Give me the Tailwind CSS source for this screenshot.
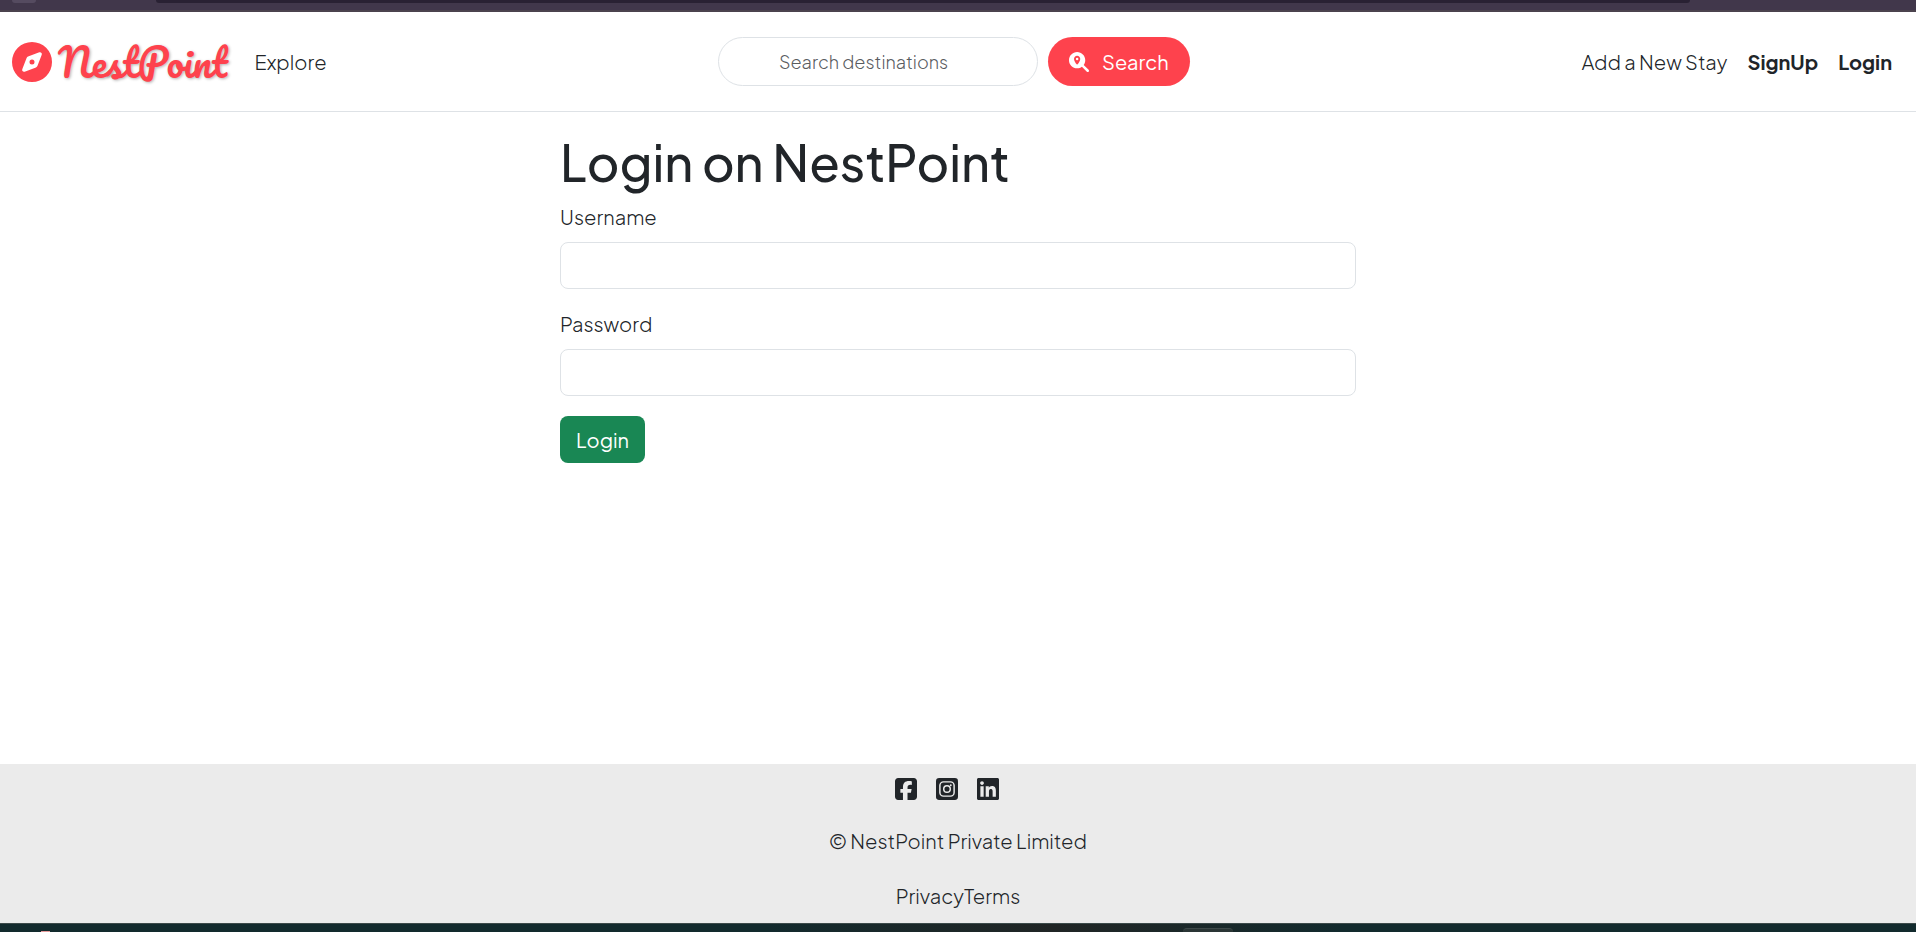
<!DOCTYPE html>
<html lang="en">
<head>
<meta charset="utf-8">
<meta name="viewport" content="width=device-width, initial-scale=1">
<title>NestPoint</title>
<script src="https://cdn.jsdelivr.net/npm/@tailwindcss/browser@4"></script>
</head>
<body class="flex min-h-screen flex-col bg-white font-['Plus_Jakarta_Sans','Inter',sans-serif] text-xl font-light text-[#212529]">
  <!-- browser frame edge -->
  <div class="flex h-3 items-start border-b-2 border-[#4b434e] bg-[#41374b]">
    <div class="ml-3 h-[3px] w-6 rounded-b-full bg-[#554b60]"></div>
    <div class="mr-[226px] ml-[120px] h-[3px] flex-1 rounded-b-full bg-[#292133]"></div>
  </div>

  <nav class="flex h-[100px] items-center border-b border-[#dee2e6] px-3">
    <div class="flex flex-1 items-center">
      <a href="#" class="flex items-center gap-[6px] text-[#fe424d]">
        <svg class="size-10" viewBox="0 0 512 512" fill="currentColor" aria-hidden="true"><path d="M256 512A256 256 0 1 0 256 0a256 256 0 1 0 0 512zm50.7-186.9L162.4 380.6c-19.4 7.5-38.5-11.6-31-31l55.5-144.3c3.3-8.5 9.9-15.1 18.4-18.4l144.3-55.5c19.4-7.5 38.5 11.6 31 31L325.1 306.7c-3.2 8.5-9.9 15.1-18.4 18.4zM288 256a32 32 0 1 0 -64 0 32 32 0 1 0 64 0z"/></svg>
        <span class="font-['Pacifico','Lato',cursive] text-[38px] leading-10 font-normal [text-shadow:1px_1px_3px_rgb(0_0_0/0.3)]">NestPoint</span>
      </a>
      <a href="#" class="ml-[27px]">Explore</a>
    </div>
    <form class="ml-1 flex items-center gap-[10px]">
      <input type="search" aria-label="Search destinations" placeholder="Search destinations" class="h-[49px] w-80 rounded-full border border-[#dee2e6] px-[60px] text-lg placeholder:text-[#595c5f]">
      <button type="button" class="flex h-[49px] w-[142px] items-center gap-[13px] rounded-full bg-[#fe424d] pl-[21px] font-normal text-white">
        <svg class="size-5" viewBox="0 0 512 512" fill="currentColor" aria-hidden="true"><path fill-rule="evenodd" d="M416 208c0 45.9-14.9 88.3-40 122.7L502.6 457.4c12.5 12.5 12.5 32.8 0 45.3s-32.8 12.5-45.3 0L330.7 376c-34.4 25.2-76.8 40-122.7 40C93.1 416 0 322.9 0 208S93.1 0 208 0S416 93.1 416 208zM288 176c0-44.2-35.8-80-80-80s-80 35.8-80 80c0 48.8 46.5 111.6 68.6 138.6c6 7.3 16.8 7.3 22.7 0c22.1-27 68.6-89.8 68.6-138.6zm-112 0a32 32 0 1 1 64 0 32 32 0 1 1 -64 0z"/></svg>
        Search
      </button>
    </form>
    <div class="flex flex-1 items-center justify-end gap-5 pr-3">
      <a href="#">Add a New Stay</a>
      <a href="#" class="font-bold">SignUp</a>
      <a href="#" class="font-bold">Login</a>
    </div>
  </nav>

  <main class="mx-auto w-full max-w-[796px] flex-1 pt-5">
    <h1 class="mb-[10px] text-[50px] leading-[60px] font-medium">Login on NestPoint</h1>
    <form>
      <label for="username" class="mb-[10px] block leading-[30px]">Username</label>
      <input id="username" type="text" class="block h-[47px] w-full rounded-lg border border-[#dee2e6] px-4">
      <label for="password" class="mt-5 mb-[10px] block leading-[30px]">Password</label>
      <input id="password" type="password" class="block h-[47px] w-full rounded-lg border border-[#dee2e6] px-4">
      <button type="button" class="mt-5 h-[47px] w-[85px] rounded-lg bg-[#198754] font-normal text-white">Login</button>
    </form>
  </main>

  <footer class="flex flex-col items-center bg-[#ebebeb] pt-[10px] pb-3">
    <div class="flex h-[30px] items-center gap-[19px] pr-[22px]">
      <a href="#" aria-label="Facebook"><svg class="size-[22px]" viewBox="0 32 448 448" fill="currentColor"><path d="M64 32C28.7 32 0 60.7 0 96V416c0 35.3 28.7 64 64 64h98.2V334.2H109.4V256h52.8V222.3c0-87.1 39.4-127.5 125-127.5c16.2 0 44.2 3.2 55.7 6.4V172c-6-.6-16.5-1-29.6-1c-42 0-58.2 15.9-58.2 57.2V256h83.6l-14.4 78.2H255V480H384c35.3 0 64-28.7 64-64V96c0-35.3-28.7-64-64-64H64z"/></svg></a>
      <a href="#" aria-label="Instagram"><svg class="size-[22px]" viewBox="0 0 448 448" fill="none"><rect width="448" height="448" rx="64" fill="#212529"/><rect x="79" y="79" width="290" height="290" rx="74" stroke="#ebebeb" stroke-width="30"/><circle cx="224" cy="224" r="67" stroke="#ebebeb" stroke-width="30"/><circle cx="301" cy="147" r="19" fill="#ebebeb"/></svg></a>
      <a href="#" aria-label="LinkedIn"><svg class="size-[22px]" viewBox="0 32 448 448" fill="currentColor"><path d="M416 32H31.9C14.3 32 0 46.5 0 64.3v383.4C0 465.5 14.3 480 31.9 480H416c17.6 0 32-14.5 32-32.3V64.3c0-17.8-14.4-32.3-32-32.3zM135.4 416H69V202.2h66.5V416zm-33.2-243c-21.3 0-38.5-17.3-38.5-38.5S80.9 96 102.2 96c21.2 0 38.5 17.3 38.5 38.5 0 21.3-17.2 38.5-38.5 38.5zm282.1 243h-66.4V312c0-24.8-.5-56.7-34.5-56.7-34.6 0-39.9 27-39.9 54.9V416h-66.4V202.2h63.7v29.2h.9c8.9-16.8 30.6-34.5 62.9-34.5 67.2 0 79.7 44.3 79.7 101.9V416z"/></svg></a>
    </div>
    <p class="mt-[22px] leading-[30px]">© NestPoint Private Limited</p>
    <p class="mt-[25px] flex leading-[30px]"><a href="#">Privacy</a><a href="#">Terms</a></p>
  </footer>

  <!-- desktop taskbar edge -->
  <div class="flex h-[9px] items-end justify-between overflow-hidden border-t border-[#3c4a4a] bg-linear-to-r from-[#122a2d] from-40% via-[#202525] via-55% to-[#122a2d] to-70%">
    <div class="ml-[41px] h-px w-[9px] bg-[#e59a9a]"></div>
    <div class="mr-[683px] h-1 w-[50px] rounded-t-lg border-t border-[#3d4848] bg-[#2a3535]"></div>
  </div>
</body>
</html>
